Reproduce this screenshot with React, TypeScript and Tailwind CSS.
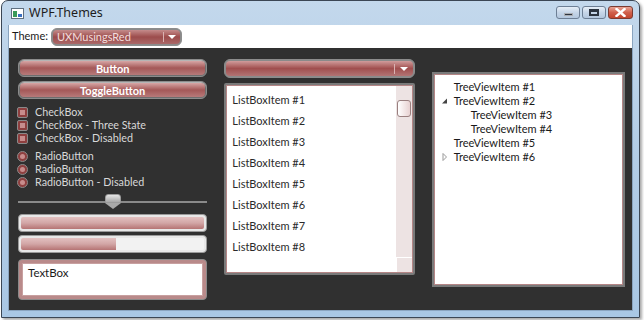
import * as React from "react"

const FONT = { fontFamily: "Lato, 'Noto Sans', sans-serif" }

const LIST_ITEMS = ["ListBoxItem #1", "ListBoxItem #2", "ListBoxItem #3", "ListBoxItem #4", "ListBoxItem #5", "ListBoxItem #6", "ListBoxItem #7", "ListBoxItem #8"]

function CaptionButton({ kind }: { kind: "min" | "max" | "close" }) {
  const isClose = kind === "close"
  return (
    <div
      className={`flex items-center justify-center h-[13px] rounded-[3px] border ${
        isClose
          ? "w-[25px] border-[#7a3b32] bg-gradient-to-b from-[#e8a495] via-[#d0604c] to-[#c2452e]"
          : "w-[24px] border-[#6d7f95] bg-gradient-to-b from-[#e6eef7] via-[#c6d6e8] to-[#b3c7de]"
      }`}
    >
      {kind === "min" && <div className="w-[9px] h-[3px] mt-[4px] bg-[#2c3440] border border-white/60" />}
      {kind === "max" && <div className="w-[10px] h-[7px] border-2 border-[#2c3440] border-t-[3px]" />}
      {kind === "close" && (
        <svg width="11" height="9" viewBox="0 0 11 9">
          <path d="M1.5 1 L9.5 8 M9.5 1 L1.5 8" stroke="#fff" strokeWidth="2.4" strokeLinecap="square" />
        </svg>
      )}
    </div>
  )
}

function RedButton({ label }: { label: string }) {
  return (
    <div className="h-[18px] rounded-[6px] border border-[#8c8c8c] bg-[#6e6e6e] p-[1px] shadow-[inset_0_1px_0_#b5b5b5]">
      <div className="h-full rounded-[4px] bg-gradient-to-b from-[#d7a6a6] via-[#a45858] to-[#b77a7a] flex items-center justify-center text-[11px] font-bold text-white leading-none">
        {label}
      </div>
    </div>
  )
}

function CheckRow({ label, radio }: { label: string; radio?: boolean }) {
  return (
    <div className="flex items-center h-[13px] gap-[7px] -ml-[1px]">
      <div
        className={`w-[11px] h-[11px] border border-[#8a8a8a] bg-[#8e3f3f] flex items-center justify-center ${
          radio ? "rounded-full" : "rounded-[2px]"
        }`}
      >
        <div className={`w-[5px] h-[5px] bg-[#c78d8d] ${radio ? "rounded-full" : ""}`} />
      </div>
      <span className="text-[10.75px] text-[#d8d8d8] leading-none">{label}</span>
    </div>
  )
}

function ProgressBar({ value }: { value: number }) {
  return (
    <div className="h-[18px] rounded-[4px] border border-[#9a9a9a] bg-[#e8e8e8] p-[2px]">
      <div className="h-full rounded-[2px] bg-[#f2f2f2] overflow-hidden">
        <div
          className="h-full bg-gradient-to-b from-[#e3c1c1] via-[#d2a6a6] to-[#b57474]"
          style={{ width: `${value}%` }}
        />
      </div>
    </div>
  )
}

export default function App() {
  return (
    <div className="w-[644px] h-[320px] bg-white overflow-hidden" style={FONT}>
      <div className="ml-[1px] w-[639px] h-[318px] rounded-t-[7px] border border-[#3b4654] bg-gradient-to-b from-[#c3d8ec] via-[#b2cce6] to-[#a9c7e4] flex flex-col shadow-[2px_2px_3px_rgba(0,0,0,0.35)]">
        {/* Title bar */}
        <div className="h-[24px] flex items-center pl-[9px] pr-[6px]">
          <div className="w-[13px] h-[11px] border border-[#607080] bg-white flex items-end p-[1px] gap-[1px]">
            <div className="w-[5px] h-[6px] bg-[#3a9a5a]" />
            <div className="w-[4px] h-[3px] bg-[#3a70c0]" />
          </div>
          <span className="ml-[5px] text-[12.5px] text-[#1d1d1d]" style={{ fontFamily: "'Noto Sans', sans-serif" }}>
            WPF.Themes
          </span>
          <div className="ml-auto flex gap-[2px] mt-[-2px]">
            <CaptionButton kind="min" />
            <CaptionButton kind="max" />
            <CaptionButton kind="close" />
          </div>
        </div>

        {/* Client area */}
        <div className="mx-[6px] mb-[6px] flex-1 flex flex-col border-x border-b border-[#8aa4bf]">
          <div className="h-[23px] bg-white flex items-center pl-[3px] gap-[3px]">
            <span className="text-[11px] text-[#1a1a1a]">Theme:</span>
            <div className="w-[131px] h-[18px] rounded-[6px] border border-[#8d8d8d] bg-[#8a8a8a] p-[1px]">
              <div className="h-full rounded-[4px] bg-gradient-to-b from-[#c48b8b] via-[#9c4c4c] to-[#aa6868] flex items-center pl-[4px]">
                <span className="text-[11px] text-[#f2dede] leading-none flex-1">UXMusingsRed</span>
                <div className="h-[10px] w-px bg-[#d9b2b2]" />
                <div className="w-[16px] flex justify-center">
                  <div className="w-0 h-0 border-l-[4px] border-r-[4px] border-t-[4px] border-l-transparent border-r-transparent border-t-white" />
                </div>
              </div>
            </div>
          </div>

          <div className="flex-1 bg-[#303030] flex pl-[9px] pr-[7px] pt-[11px] gap-[17px]">
            {/* Left column */}
            <div className="w-[190px] flex flex-col">
              <RedButton label="Button" />
              <div className="h-[4px]" />
              <RedButton label="ToggleButton" />
              <div className="mt-[7px] flex flex-col">
                <CheckRow label="CheckBox" />
                <CheckRow label="CheckBox - Three State" />
                <CheckRow label="CheckBox - Disabled" />
              </div>
              <div className="mt-[5px] flex flex-col">
                <CheckRow label="RadioButton" radio />
                <CheckRow label="RadioButton" radio />
                <CheckRow label="RadioButton - Disabled" radio />
              </div>
              <div className="relative h-[18px] mt-[4px] flex items-center">
                <div className="h-[2px] w-full bg-[#8a8a8a]" />
                <div className="absolute left-[87px] top-[1px] flex flex-col items-center">
                  <div className="w-[16px] h-[9px] rounded-t-[3px] border border-[#9a9a9a] bg-gradient-to-b from-[#e5e5e5] to-[#a8a8a8]" />
                  <div className="w-0 h-0 border-l-[8px] border-r-[8px] border-t-[6px] border-l-transparent border-r-transparent border-t-[#a8a8a8]" />
                </div>
              </div>
              <div className="mt-[3px] flex flex-col gap-[3px]">
                <ProgressBar value={100} />
                <ProgressBar value={52} />
              </div>
              <div className="mt-[6px] h-[41px] rounded-[4px] border border-[#8a8a8a] bg-[#b98a8a] p-[3px]">
                <div className="h-full bg-white border border-[#c8a0a0] px-[5px] pt-[3px] text-[11.5px] text-[#1a1a1a] leading-none">
                  TextBox
                </div>
              </div>
            </div>

            {/* Middle column */}
            <div className="w-[191px] flex flex-col">
              <div className="h-[19px] rounded-[6px] border border-[#8c8c8c] bg-[#8a8a8a] p-[1px]">
                <div className="h-full rounded-[4px] bg-gradient-to-b from-[#d09c9c] via-[#a04f4f] to-[#b27474] flex items-center justify-end">
                  <div className="h-[10px] w-px bg-[#d9b2b2]" />
                  <div className="w-[18px] flex justify-center">
                    <div className="w-0 h-0 border-l-[4px] border-r-[4px] border-t-[4px] border-l-transparent border-r-transparent border-t-white" />
                  </div>
                </div>
              </div>
              <div className="mt-[5px] h-[192px] rounded-[2px] border-2 border-[#7a7a7a] bg-[#b48585] p-[1px] flex">
                <div className="flex-1 bg-white flex flex-col pl-[5px] pt-[4px]">
                  {LIST_ITEMS.map((item) => (
                    <div key={item} className="h-[21px] flex items-center text-[11px] text-[#2a2a2a]">
                      {item}
                    </div>
                  ))}
                </div>
                <div className="w-[16px] bg-[#ede3e3] flex flex-col">
                  <div className="mt-[14px] mx-[1px] h-[17px] rounded-[3px] border border-[#9a8080] bg-gradient-to-r from-[#ffffff] to-[#e8d2d2]" />
                  <div className="mt-auto h-[15px] border-t border-l border-white" />
                </div>
              </div>
            </div>

            {/* Right column */}
            <div className="w-[194px] flex flex-col pt-[13px]">
              <div className="h-[215px] border-2 border-[#7a7a7a] bg-[#b48585] p-[1px]">
                <div className="h-full bg-white pt-[5px] flex flex-col text-[11px] text-[#1a1a1a]">
                  <div className="h-[14px] flex items-center pl-[19px]">TreeViewItem #1</div>
                  <div className="h-[14px] flex items-center pl-[6px]">
                    <svg width="13" height="8" viewBox="0 0 13 8">
                      <path d="M1 6.5 L6 6.5 L6 1.5 Z" fill="#444" />
                    </svg>
                    TreeViewItem #2
                  </div>
                  <div className="h-[14px] flex items-center pl-[36px]">TreeViewItem #3</div>
                  <div className="h-[14px] flex items-center pl-[36px]">TreeViewItem #4</div>
                  <div className="h-[14px] flex items-center pl-[19px]">TreeViewItem #5</div>
                  <div className="h-[14px] flex items-center pl-[6px]">
                    <svg width="13" height="8" viewBox="0 0 13 8">
                      <path d="M2 0.5 L5.5 4 L2 7.5 Z" fill="none" stroke="#999" />
                    </svg>
                    TreeViewItem #6
                  </div>
                </div>
              </div>
            </div>
          </div>
        </div>
      </div>
    </div>
  )
}
